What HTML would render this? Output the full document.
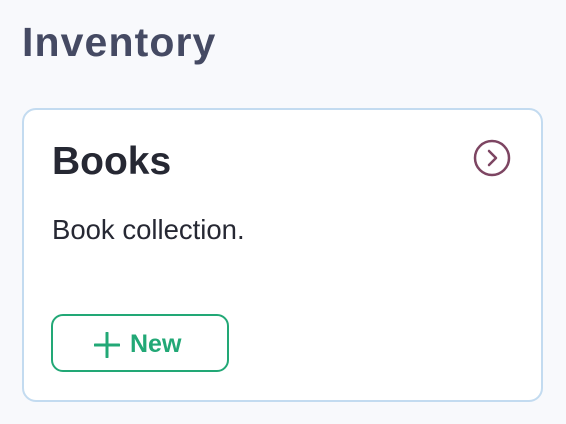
<!DOCTYPE html>
<html><head><style>
body{margin:0;width:566px;height:424px;background:#f8f9fc;font-family:"Liberation Sans",sans-serif;position:relative;overflow:hidden}
h1{position:absolute;left:22px;top:17px;margin:0;font-size:41px;font-weight:bold;color:#454a63;letter-spacing:1.1px;line-height:50px}
.card{position:absolute;left:22px;top:108px;width:517px;height:290px;border:2px solid #c3dbf0;border-radius:14px;background:#fff}
.t{position:absolute;left:28px;top:30px;font-size:39px;font-weight:bold;color:#262833;line-height:44px}
.d{position:absolute;left:28px;top:104px;font-size:27.5px;color:#262833;line-height:32px}
.btn{position:absolute;left:27px;top:204px;width:174px;height:54px;border:2px solid #22a876;border-radius:12px;color:#22a876;font-weight:bold;font-size:25px}
.btn span{position:absolute;left:77px;top:14px;line-height:28px}
</style></head><body>
<h1>Inventory</h1>
<div class="card">
<div class="t">Books</div>
<svg style="position:absolute;left:448px;top:28px" width="40" height="40" viewBox="0 0 40 40"><circle cx="20" cy="20" r="17" fill="none" stroke="#7d4562" stroke-width="2.5"/><path d="M17 13l7 7-7 7" fill="none" stroke="#7d4562" stroke-width="2.5" stroke-linecap="round" stroke-linejoin="round"/></svg>
<div class="d">Book collection.</div>
<div class="btn"><svg style="position:absolute;left:41px;top:16px" width="26" height="26" viewBox="0 0 26 26"><path d="M13 1v24M1 13h24" stroke="#22a876" stroke-width="3" stroke-linecap="round"/></svg><span>New</span></div>
</div>
</body></html>
